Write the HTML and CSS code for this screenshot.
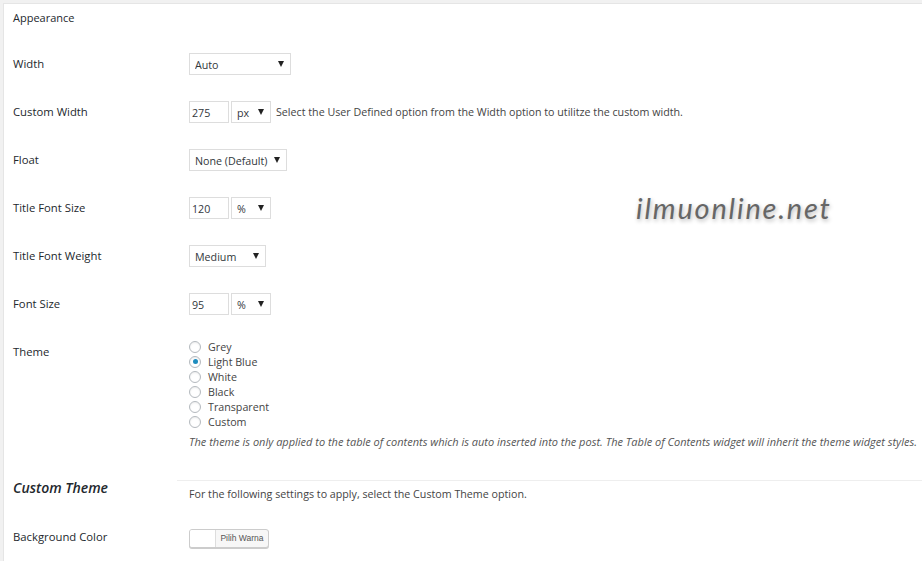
FILE: index.html
```html
<!DOCTYPE html>
<html>
<head>
    <meta charset="UTF-8">
    <title>Table of Contents - Appearance</title>
    <link rel="stylesheet" href="styles.css">
</head>
<body>
    <div class="panel">
        <div class="section-title">Appearance</div>

        <div class="row">
            <div class="label">Width</div>
            <div class="field">
                <span class="select w-width"><select><option>Auto</option></select></span>
            </div>
        </div>

        <div class="row">
            <div class="label">Custom Width</div>
            <div class="field">
                <input class="num" type="text" value="275">
                <span class="select w-unit"><select><option>px</option></select></span>
                <span class="hint">Select the User Defined option from the Width option to utilitze the custom width.</span>
            </div>
        </div>

        <div class="row">
            <div class="label">Float</div>
            <div class="field">
                <span class="select w-float"><select><option>None (Default)</option></select></span>
            </div>
        </div>

        <div class="row">
            <div class="label">Title Font Size</div>
            <div class="field">
                <input class="num" type="text" value="120">
                <span class="select w-unit"><select><option>%</option></select></span>
            </div>
        </div>

        <div class="row">
            <div class="label">Title Font Weight</div>
            <div class="field">
                <span class="select w-weight"><select><option>Medium</option></select></span>
            </div>
        </div>

        <div class="row">
            <div class="label">Font Size</div>
            <div class="field">
                <input class="num" type="text" value="95">
                <span class="select w-unit"><select><option>%</option></select></span>
            </div>
        </div>

        <div class="row row-theme">
            <div class="label">Theme</div>
            <div class="field">
                <div class="radios">
                    <label><span class="radio"></span>Grey</label>
                    <label><span class="radio checked"></span>Light Blue</label>
                    <label><span class="radio"></span>White</label>
                    <label><span class="radio"></span>Black</label>
                    <label><span class="radio"></span>Transparent</label>
                    <label><span class="radio"></span>Custom</label>
                </div>
                <p class="description">The theme is only applied to the table of contents which is auto inserted into the post. The Table of Contents widget will inherit the theme widget styles.</p>
            </div>
        </div>

        <div class="row row-custom">
            <div class="label heading">Custom Theme</div>
            <div class="field">
                <hr>
                <p class="note">For the following settings to apply, select the Custom Theme option.</p>
            </div>
        </div>

        <div class="row row-color">
            <div class="label">Background Color</div>
            <div class="field">
                <button class="color-btn"><span class="swatch"></span><span class="color-text">Pilih Warna</span></button>
            </div>
        </div>
    </div>

    <div class="watermark">ilmuonline.net</div>
</body>
</html>
```

FILE: styles.css
```css
body {
    margin: 0;
    background: #f1f1f1;
    font-family: "Open Sans", "Noto Sans", sans-serif;
    font-size: 10.7px;
    color: #444;
    overflow: hidden;
}
.panel {
    margin: 3px 0 0 3px;
    border-left: 1px solid #e5e5e5;
    border-top: 1px solid #e5e5e5;
    background: #fff;
    padding-left: 9px;
    min-height: calc(100vh - 4px);
}
.section-title {
    padding: 3px 0 11px;
    line-height: 22px;
    font-size: 11px;
    color: #23282d;
    font-weight: 500;
}
.row {
    display: grid;
    grid-template-columns: 176px 1fr;
    padding: 13px 0;
}
.label {
    line-height: 22px;
    font-size: 11.3px;
    color: #23282d;
    font-weight: 500;
}
.field {
    display: flex;
    align-items: center;
    height: 22px;
}
.select {
    position: relative;
    display: inline-block;
    height: 22px;
}
.select select {
    appearance: none;
    -webkit-appearance: none;
    box-sizing: border-box;
    width: 100%;
    height: 22px;
    border: 1px solid #ddd;
    border-radius: 0;
    background: #fff;
    padding: 2px 0 0 5px;
    font-family: inherit;
    font-size: 10.7px;
    color: #32373c;
}
.select::after {
    content: "";
    position: absolute;
    right: 7px;
    top: 8px;
    border-left: 3px solid transparent;
    border-right: 3px solid transparent;
    border-top: 6px solid #222;
    pointer-events: none;
}
.w-width { width: 102px; }
.w-unit { width: 40px; margin-left: 2px; }
.w-float { width: 98px; }
.w-weight { width: 77px; }
.num {
    box-sizing: border-box;
    width: 40px;
    height: 22px;
    border: 1px solid #ddd;
    padding: 2px 0 0 2px;
    font-family: inherit;
    font-size: 10.7px;
    color: #32373c;
}
.hint {
    margin-left: 5px;
    color: #444;
}
.row-theme {
    padding-bottom: 28px;
}
.row-theme .field {
    display: block;
    height: auto;
}
.radios {
    margin-top: -2px;
}
.radios label {
    display: flex;
    align-items: center;
    height: 15px;
    color: #444;
}
.radio {
    box-sizing: border-box;
    width: 12px;
    height: 12px;
    border: 1px solid #b4b9be;
    border-radius: 50%;
    margin-right: 7px;
    position: relative;
    box-shadow: inset 0 1px 2px rgba(0,0,0,0.08);
}
.radio.checked::after {
    content: "";
    position: absolute;
    left: 2.5px;
    top: 2.5px;
    width: 5px;
    height: 5px;
    border-radius: 50%;
    background: #1e8cbe;
}
.description {
    margin: 5px 0 0;
    line-height: 16px;
    font-size: 11px;
    font-style: italic;
    color: #555;
    white-space: nowrap;
}
.row-custom {
    padding: 0 0 24px;
}
.heading {
    font-size: 14px;
    font-weight: 600;
    font-style: italic;
    line-height: 20px;
}
.row-custom .field {
    display: block;
    height: auto;
}
.row-custom hr {
    margin: 2px 0 0 -12px;
    border: 0;
    border-top: 1px solid #eee;
}
.note {
    margin: 5px 0 0;
    line-height: 16px;
}
.row-color {
    padding-top: 0;
}
.color-btn {
    display: flex;
    align-items: stretch;
    margin: 2px 0 0;
    padding: 0;
    height: 19px;
    width: 80px;
    border: 1px solid #ccc;
    border-radius: 3px;
    background: #f7f7f7;
    box-shadow: 0 1px 0 #ccc;
    overflow: hidden;
}
.swatch {
    width: 25px;
    background: #fff;
    border-right: 1px solid #ddd;
}
.color-text {
    flex: 1;
    font-family: inherit;
    font-size: 8.5px;
    line-height: 17px;
    color: #555;
}
.watermark {
    position: absolute;
    left: 636px;
    top: 190px;
    font-family: "Lato", sans-serif;
    font-style: italic;
    font-size: 29px;
    letter-spacing: 1.8px;
    color: #666;
    text-shadow: 1px 2px 4px rgba(0,0,0,0.3);
}
```
